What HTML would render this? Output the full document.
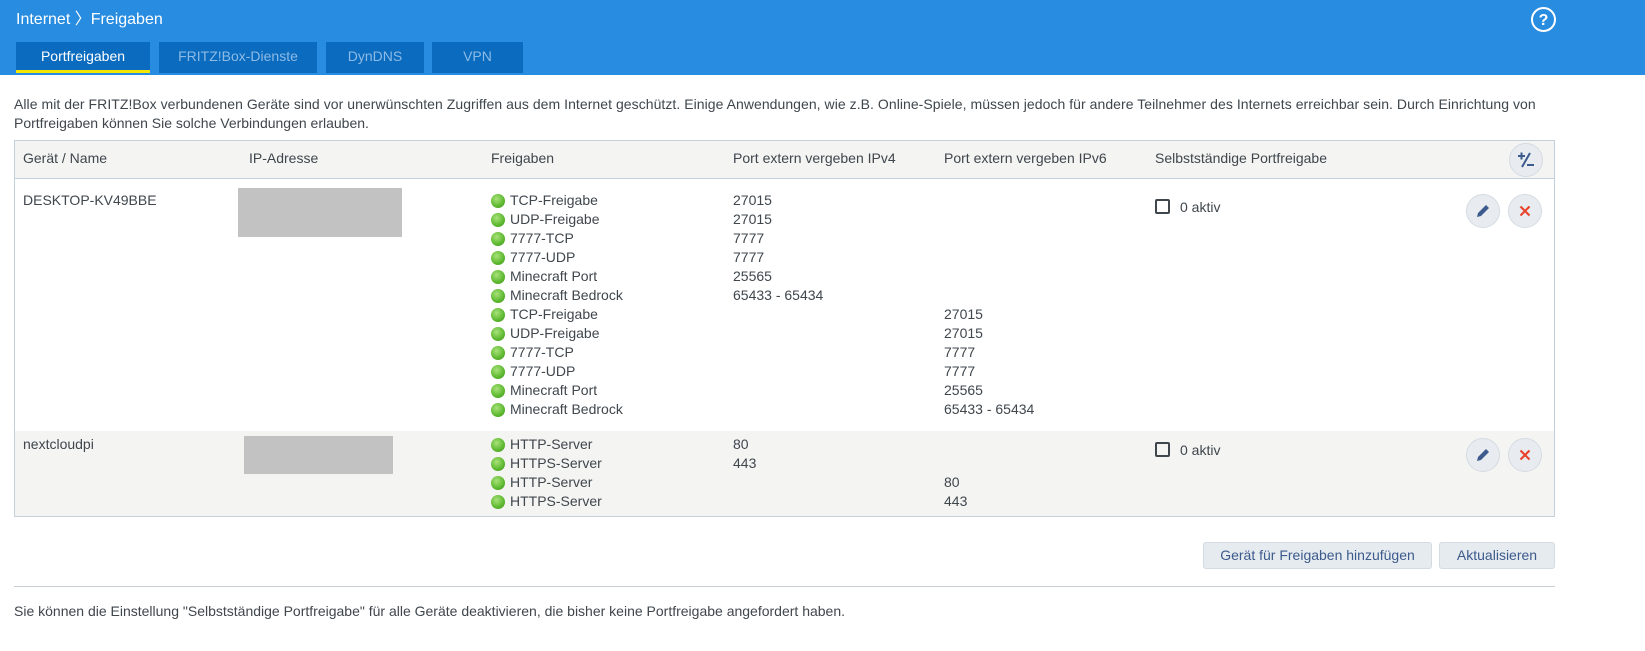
<!DOCTYPE html>
<html><head><meta charset="utf-8"><style>
*{margin:0;padding:0;box-sizing:border-box}
body{width:1645px;height:651px;background:#fff;font-family:"Liberation Sans",sans-serif;font-size:14px;color:#3f464c;position:relative;overflow:hidden}
.a{position:absolute;white-space:nowrap;line-height:19px}
#hd{position:absolute;left:0;top:0;width:1645px;height:75px;background:#288ce0}
.tab{position:absolute;top:42px;height:31px;background:#0a6bbf;color:#8dbbe6;font-size:14px;text-align:center;line-height:29px}
.tab.on{color:#fff;border-bottom:3px solid #f5e600}
.dot{position:absolute;width:14px;height:14px;border-radius:50%;background:radial-gradient(circle at 40% 35%,#a8e27a,#5cb82e 60%,#3d8f1e)}
.cb{position:absolute;width:15px;height:15px;border:2px solid #3f464c;border-radius:2px}
.rb{position:absolute;width:34px;height:34px;border-radius:50%;background:#e8ecf0;border:1px solid #d4dbe2}
.btn{position:absolute;top:542px;height:27px;background:#e6ebef;border:1px solid #d4dbe2;border-radius:3px;color:#3c5a8c;font-size:14px;text-align:center;line-height:25px}
</style></head><body>
<div id="hd"></div>
<div class="a" style="left:16px;top:9px;color:#fff;font-size:16px;line-height:22px">Internet 〉Freigaben</div>
<svg class="a" style="left:1530px;top:6px" width="27" height="27" viewBox="0 0 27 27"><circle cx="13.5" cy="13.5" r="11.5" fill="none" stroke="#fff" stroke-width="2"/><text x="13.5" y="19" text-anchor="middle" fill="#fff" font-family="Liberation Sans" font-weight="bold" font-size="16">?</text></svg>
<div class="tab on" style="left:16px;width:134px">Portfreigaben</div>
<div class="tab" style="left:159px;width:158px">FRITZ!Box-Dienste</div>
<div class="tab" style="left:326px;width:98px">DynDNS</div>
<div class="tab" style="left:432px;width:91px">VPN</div>
<div class="a" style="left:14px;top:95px;letter-spacing:0.05px">Alle mit der FRITZ!Box verbundenen Geräte sind vor unerwünschten Zugriffen aus dem Internet geschützt. Einige Anwendungen, wie z.B. Online-Spiele, müssen jedoch für andere Teilnehmer des Internets erreichbar sein. Durch Einrichtung von</div>
<div class="a" style="left:14px;top:114px">Portfreigaben können Sie solche Verbindungen erlauben.</div>
<div style="position:absolute;left:14px;top:140px;width:1541px;height:377px;border:1px solid #c2d0dc"></div>
<div style="position:absolute;left:15px;top:141px;width:1539px;height:38px;background:#f4f4f3;border-bottom:1px solid #c2d0dc"></div>
<div style="position:absolute;left:15px;top:431px;width:1539px;height:85px;background:#f4f4f3"></div>
<div class="a" style="left:23px;top:149px">Gerät / Name</div>
<div class="a" style="left:249px;top:149px">IP-Adresse</div>
<div class="a" style="left:491px;top:149px">Freigaben</div>
<div class="a" style="left:733px;top:149px">Port extern vergeben IPv4</div>
<div class="a" style="left:944px;top:149px">Port extern vergeben IPv6</div>
<div class="a" style="left:1155px;top:149px">Selbstständige Portfreigabe</div>
<div class="rb" style="left:1509px;top:143px"></div>
<svg class="a" style="left:1514px;top:148px" width="24" height="24" viewBox="0 0 24 24" fill="none" stroke="#3c5a8c" stroke-width="2"><path d="M4 8h7M7.5 4.5v7M16 5L8 19M13 17h7"/></svg>
<div class="a" style="left:23px;top:191px">DESKTOP-KV49BBE</div>
<div style="position:absolute;left:238px;top:188px;width:164px;height:49px;background:#c2c2c2"></div>
<div class="a" style="left:23px;top:435px">nextcloudpi</div>
<div style="position:absolute;left:244px;top:436px;width:149px;height:38px;background:#c2c2c2"></div>
<div id="rows"></div>
<div class="cb" style="left:1155px;top:199px"></div><div class="a" style="left:1180px;top:198px">0 aktiv</div>
<div class="cb" style="left:1155px;top:442px"></div><div class="a" style="left:1180px;top:441px">0 aktiv</div>
<div class="rb" style="left:1466px;top:194px"></div>
<svg class="a" style="left:1474px;top:202px" width="18" height="18" viewBox="0 0 18 18"><path d="M3 15l1-4 8-8 3 3-8 8z" fill="#3c5a8c"/></svg>
<div class="rb" style="left:1508px;top:194px"></div>
<svg class="a" style="left:1519px;top:205px" width="12" height="12" viewBox="0 0 12 12" stroke="#e8452c" stroke-width="2.2"><path d="M1.5 1.5l9 9M10.5 1.5l-9 9"/></svg>
<div class="rb" style="left:1466px;top:438px"></div>
<svg class="a" style="left:1474px;top:446px" width="18" height="18" viewBox="0 0 18 18"><path d="M3 15l1-4 8-8 3 3-8 8z" fill="#3c5a8c"/></svg>
<div class="rb" style="left:1508px;top:438px"></div>
<svg class="a" style="left:1519px;top:449px" width="12" height="12" viewBox="0 0 12 12" stroke="#e8452c" stroke-width="2.2"><path d="M1.5 1.5l9 9M10.5 1.5l-9 9"/></svg>
<div class="btn" style="left:1203px;width:229px">Gerät für Freigaben hinzufügen</div>
<div class="btn" style="left:1439px;width:116px">Aktualisieren</div>
<div style="position:absolute;left:14px;top:586px;width:1541px;height:1px;background:#c8ced4"></div>
<div class="a" style="left:14px;top:602px">Sie können die Einstellung "Selbstständige Portfreigabe" für alle Geräte deaktivieren, die bisher keine Portfreigabe angefordert haben.</div>
<script>
var d=[["TCP-Freigabe","27015",""],["UDP-Freigabe","27015",""],["7777-TCP","7777",""],["7777-UDP","7777",""],["Minecraft Port","25565",""],["Minecraft Bedrock","65433 - 65434",""],["TCP-Freigabe","","27015"],["UDP-Freigabe","","27015"],["7777-TCP","","7777"],["7777-UDP","","7777"],["Minecraft Port","","25565"],["Minecraft Bedrock","","65433 - 65434"]];
var e=[["HTTP-Server","80",""],["HTTPS-Server","443",""],["HTTP-Server","","80"],["HTTPS-Server","","443"]];
var h="";
function add(arr,y0){arr.forEach(function(r,i){var y=y0+i*19;h+='<div class="dot" style="left:491px;top:'+(y+3)+'px"></div><div class="a" style="left:510px;top:'+y+'px">'+r[0]+'</div><div class="a" style="left:733px;top:'+y+'px">'+r[1]+'</div><div class="a" style="left:944px;top:'+y+'px">'+r[2]+'</div>';});}
add(d,191);add(e,435);
document.getElementById("rows").innerHTML=h;
</script>
</body></html>
